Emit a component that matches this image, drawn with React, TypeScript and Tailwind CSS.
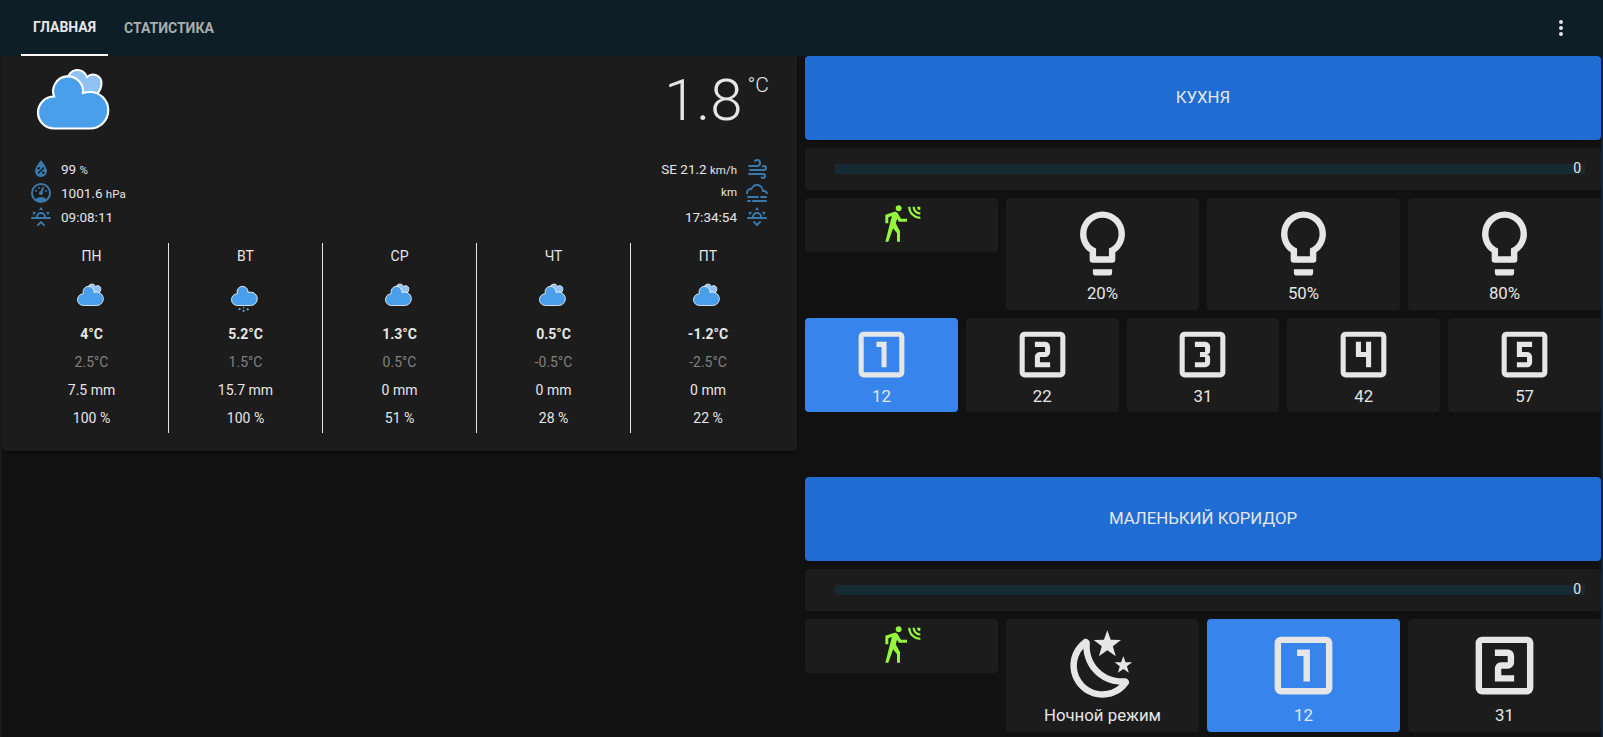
import React from 'react';

const PATHS: Record<string, string> = {
  bulb: 'M12,2A7,7 0 0,1 19,9C19,11.38 17.81,13.47 16,14.74V17A1,1 0 0,1 15,18H9A1,1 0 0,1 8,17V14.74C6.19,13.47 5,11.38 5,9A7,7 0 0,1 12,2M9,21V20H15V21A1,1 0 0,1 14,22H10A1,1 0 0,1 9,21M12,4A5,5 0 0,0 7,9C7,11.05 8.23,12.81 10,13.58V16H14V13.58C15.77,12.81 17,11.05 17,9A5,5 0 0,0 12,4Z',
  n1: 'M14,17H12V9H10V7H14M19,19H5V5H19M19,3H5A2,2 0 0,0 3,5V19A2,2 0 0,0 5,21H19A2,2 0 0,0 21,19V5C21,3.89 20.1,3 19,3Z',
  n2: 'M15,11C15,12.11 14.1,13 13,13H11V15H15V17H9V13C9,11.89 9.9,11 11,11H13V9H9V7H13A2,2 0 0,1 15,9M19,19H5V5H19M19,3H5A2,2 0 0,0 3,5V19A2,2 0 0,0 5,21H19A2,2 0 0,0 21,19V5C21,3.89 20.1,3 19,3Z',
  n3: 'M15,15V13.5A1.5,1.5 0 0,0 13.5,12A1.5,1.5 0 0,0 15,10.5V9C15,7.89 14.1,7 13,7H9V9H13V11H11V13H13V15H9V17H13A2,2 0 0,0 15,15M19,19H5V5H19M19,3H5A2,2 0 0,0 3,5V19A2,2 0 0,0 5,21H19A2,2 0 0,0 21,19V5C21,3.89 20.1,3 19,3Z',
  n4: 'M19,19V5H5V19H19M19,3A2,2 0 0,1 21,5V19A2,2 0 0,1 19,21H5A2,2 0 0,1 3,19V5A2,2 0 0,1 5,3H19M13,17V13H9V7H11V11H13V7H15V17H13Z',
  n5: 'M15,9H11V11H13A2,2 0 0,1 15,13V15C15,16.11 14.1,17 13,17H9V15H13V13H9V7H15M19,19H5V5H19M19,3H5A2,2 0 0,0 3,5V19A2,2 0 0,0 5,21H19A2,2 0 0,0 21,19V5C21,3.89 20.1,3 19,3Z',
  night: 'M17.75,4.09L15.22,6.03L16.13,9.09L13.5,7.28L10.87,9.09L11.78,6.03L9.25,4.09L12.44,4L13.5,1L14.56,4L17.75,4.09M21.25,11L19.61,12.25L20.2,14.23L18.5,13.06L16.8,14.23L17.39,12.25L15.75,11L17.81,10.95L18.5,9L19.19,10.95L21.25,11M18.97,15.95C19.8,15.87 20.69,17.05 20.16,17.8C19.84,18.25 19.5,18.67 19.08,19.07C15.17,23 8.84,23 4.94,19.07C1.03,15.17 1.03,8.83 4.94,4.93C5.34,4.53 5.76,4.17 6.21,3.85C6.96,3.32 8.14,4.21 8.06,5.04C7.79,7.9 8.75,10.87 10.95,13.06C13.14,15.26 16.1,16.22 18.97,15.95M17.33,17.97C14.5,17.81 11.7,16.64 9.53,14.5C7.36,12.31 6.2,9.5 6.04,6.68C3.23,9.82 3.34,14.64 6.35,17.66C9.37,20.67 14.19,20.78 17.33,17.97Z',
  motion: 'M10,0.2C9,0.2 8.2,1 8.2,2C8.2,3 9,3.8 10,3.8C11,3.8 11.8,3 11.8,2C11.8,1 11,0.2 10,0.2M15.67,1A7.33,7.33 0 0,0 23,8.33V7A6,6 0 0,1 17,1H15.67M18.33,1C18.33,3.58 20.42,5.67 23,5.67V4.33C21.16,4.33 19.67,2.84 19.67,1H18.33M21,1A2,2 0 0,0 23,3V1H21M7.92,4.03C7.75,4.03 7.58,4.06 7.42,4.11L2,5.8V11H3.8V7.33L5.91,6.67L2,22H3.8L6.67,13.89L9,17V22H10.8V15.59L8.31,11.05L9.04,8.18L10.12,10H15V8.2H11.38L9.38,4.87C9.08,4.37 8.54,4.03 7.92,4.03Z',
  drop: 'M12,3.25C12,3.25 6,10 6,14C6,17.32 8.69,20 12,20A6,6 0 0,0 18,14C18,10 12,3.25 12,3.25M14.47,9.97L15.53,11.03L9.53,17.03L8.47,15.97M9.75,10A1.25,1.25 0 0,1 11,11.25A1.25,1.25 0 0,1 9.75,12.5A1.25,1.25 0 0,1 8.5,11.25A1.25,1.25 0 0,1 9.75,10M14.25,14.5A1.25,1.25 0 0,1 15.5,15.75A1.25,1.25 0 0,1 14.25,17A1.25,1.25 0 0,1 13,15.75A1.25,1.25 0 0,1 14.25,14.5Z',
  gauge: 'M12,2A10,10 0 0,0 2,12A10,10 0 0,0 12,22A10,10 0 0,0 22,12A10,10 0 0,0 12,2M12,4A8,8 0 0,1 20,12C20,14.4 19,16.5 17.3,18C15.9,16.7 14,16 12,16C10,16 8.2,16.7 6.7,18C5,16.5 4,14.4 4,12A8,8 0 0,1 12,4M14,5.89C13.62,5.9 13.26,6.15 13.1,6.54L11.81,9.77L11.71,10C11,10.13 10.41,10.6 10.14,11.26C9.73,12.29 10.23,13.45 11.26,13.86C12.29,14.27 13.45,13.77 13.86,12.74C14.12,12.08 14,11.32 13.57,10.76L13.67,10.5L14.96,7.29L14.97,7.26C15.17,6.75 14.92,6.17 14.41,5.96C14.28,5.91 14.15,5.89 14,5.89M10,6A1,1 0 0,0 9,7A1,1 0 0,0 10,8A1,1 0 0,0 11,7A1,1 0 0,0 10,6M7,9A1,1 0 0,0 6,10A1,1 0 0,0 7,11A1,1 0 0,0 8,10A1,1 0 0,0 7,9M17,9A1,1 0 0,0 16,10A1,1 0 0,0 17,11A1,1 0 0,0 18,10A1,1 0 0,0 17,9Z',
  sunup: 'M3,12H7A5,5 0 0,1 12,7A5,5 0 0,1 17,12H21A1,1 0 0,1 22,13A1,1 0 0,1 21,14H3A1,1 0 0,1 2,13A1,1 0 0,1 3,12M15,12A3,3 0 0,0 12,9A3,3 0 0,0 9,12H15M12,2L14.39,5.42C13.65,5.15 12.84,5 12,5C11.16,5 10.35,5.15 9.61,5.42L12,2M3.34,7L7.5,6.65C6.9,7.16 6.36,7.78 5.94,8.5C5.5,9.24 5.25,10 5.11,10.79L3.34,7M20.65,7L18.88,10.79C18.74,10 18.47,9.23 18.05,8.5C17.63,7.78 17.1,7.15 16.5,6.64L20.65,7M12.71,16.3L15.82,19.41C16.21,19.8 16.21,20.43 15.82,20.82C15.43,21.21 14.8,21.21 14.41,20.82L12,18.41L9.59,20.82C9.2,21.21 8.57,21.21 8.18,20.82C7.79,20.43 7.79,19.8 8.18,19.41L11.29,16.3C11.5,16.1 11.74,16 12,16C12.26,16 12.5,16.1 12.71,16.3Z',
  sundown: 'M3,12H7A5,5 0 0,1 12,7A5,5 0 0,1 17,12H21A1,1 0 0,1 22,13A1,1 0 0,1 21,14H3A1,1 0 0,1 2,13A1,1 0 0,1 3,12M15,12A3,3 0 0,0 12,9A3,3 0 0,0 9,12H15M12,2L14.39,5.42C13.65,5.15 12.84,5 12,5C11.16,5 10.35,5.15 9.61,5.42L12,2M3.34,7L7.5,6.65C6.9,7.16 6.36,7.78 5.94,8.5C5.5,9.24 5.25,10 5.11,10.79L3.34,7M20.65,7L18.88,10.79C18.74,10 18.47,9.23 18.05,8.5C17.63,7.78 17.1,7.15 16.5,6.64L20.65,7M12.71,20.71L15.82,17.6C16.21,17.21 16.21,16.57 15.82,16.18C15.43,15.79 14.8,15.79 14.41,16.18L12,18.59L9.59,16.18C9.2,15.79 8.57,15.79 8.18,16.18C7.79,16.57 7.79,17.21 8.18,17.6L11.29,20.71C11.5,20.9 11.74,21 12,21C12.26,21 12.5,20.9 12.71,20.71Z',
  windy: 'M4,10A1,1 0 0,1 3,9A1,1 0 0,1 4,8H12A2,2 0 0,0 14,6A2,2 0 0,0 12,4C11.45,4 10.95,4.22 10.59,4.59C10.2,5 9.56,5 9.17,4.59C8.78,4.2 8.78,3.56 9.17,3.17C9.9,2.45 10.9,2 12,2A4,4 0 0,1 16,6A4,4 0 0,1 12,10H4M19,12A1,1 0 0,0 20,11A1,1 0 0,0 19,10C18.72,10 18.47,10.11 18.29,10.29C17.9,10.68 17.27,10.68 16.88,10.29C16.5,9.9 16.5,9.27 16.88,8.88C17.42,8.34 18.17,8 19,8A3,3 0 0,1 22,11A3,3 0 0,1 19,14H5A1,1 0 0,1 4,13A1,1 0 0,1 5,12H19M18,18H4A1,1 0 0,1 3,17A1,1 0 0,1 4,16H18A3,3 0 0,1 21,19A3,3 0 0,1 18,22C17.17,22 16.42,21.66 15.88,21.12C15.5,20.73 15.5,20.1 15.88,19.71C16.27,19.32 16.9,19.32 17.29,19.71C17.47,19.89 17.72,20 18,20A1,1 0 0,0 19,19A1,1 0 0,0 18,18Z',
  fog: 'M3,15H13A1,1 0 0,1 14,16A1,1 0 0,1 13,17H3A1,1 0 0,1 2,16A1,1 0 0,1 3,15M16,15H21A1,1 0 0,1 22,16A1,1 0 0,1 21,17H16A1,1 0 0,1 15,16A1,1 0 0,1 16,15M1,12A5,5 0 0,1 6,7C7,4.65 9.3,3 12,3C15.43,3 18.24,5.66 18.5,9.03L19,9C21.19,9 22.97,10.76 23,13H21A2,2 0 0,0 19,11H17V10A5,5 0 0,0 12,5C9.5,5 7.45,6.82 7.06,9.19C6.73,9.07 6.37,9 6,9A3,3 0 0,0 3,12C3,12.35 3.06,12.69 3.17,13H1.1L1,12M3,19H5A1,1 0 0,1 6,20A1,1 0 0,1 5,21H3A1,1 0 0,1 2,20A1,1 0 0,1 3,19M8,19H21A1,1 0 0,1 22,20A1,1 0 0,1 21,21H8A1,1 0 0,1 7,20A1,1 0 0,1 8,19Z',
  dots: 'M12,16A2,2 0 0,1 14,18A2,2 0 0,1 12,20A2,2 0 0,1 10,18A2,2 0 0,1 12,16M12,10A2,2 0 0,1 14,12A2,2 0 0,1 12,14A2,2 0 0,1 10,12A2,2 0 0,1 12,10M12,4A2,2 0 0,1 14,6A2,2 0 0,1 12,8A2,2 0 0,1 10,6A2,2 0 0,1 12,4Z',
};

const Icon = ({ name, className }: { name: string; className: string }) => (
  <svg viewBox="0 0 24 24" className={className} fill="currentColor">
    <path d={PATHS[name]} />
  </svg>
);

const MAIN_CLOUD = 'M20 63.5 A16 16 0 0 1 20 31.5 A15 15 0 1 1 49 28 C51 27.4 53.5 27 56 27 A18.2 18.2 0 0 1 56 63.5 Z';
const BACK_CLOUD = 'M33.5 14 A10 10 0 0 1 53 12 A8.5 8.5 0 0 1 67.5 18 C67.5 23 66 26 63 29 L44 31 Z';

const Cloud = ({ className, back = true, snow = false }: { className: string; back?: boolean; snow?: boolean }) => (
  <svg viewBox="0 0 76 78" className={`overflow-visible ${className}`}>
    {back && <path d={BACK_CLOUD} fill="#90c2f5" stroke="#ffffff" strokeWidth="2" />}
    <path d={MAIN_CLOUD} fill="#4a9fea" stroke="#ffffff" strokeWidth="2.2" />
    {snow && (
      <g fill="#6aa9e0">
        <circle cx="26" cy="73" r="3" />
        <circle cx="37" cy="78" r="3" />
        <circle cx="48" cy="74" r="3" />
        <circle cx="37" cy="69" r="2" />
      </g>
    )}
  </svg>
);

const DAYS = [
  { day: 'ПН', hi: '4°C', lo: '2.5°C', rain: '7.5 mm', pop: '100 %', snow: false },
  { day: 'ВТ', hi: '5.2°C', lo: '1.5°C', rain: '15.7 mm', pop: '100 %', snow: true },
  { day: 'СР', hi: '1.3°C', lo: '0.5°C', rain: '0 mm', pop: '51 %', snow: false },
  { day: 'ЧТ', hi: '0.5°C', lo: '-0.5°C', rain: '0 mm', pop: '28 %', snow: false },
  { day: 'ПТ', hi: '-1.2°C', lo: '-2.5°C', rain: '0 mm', pop: '22 %', snow: false },
];

const WeatherCard = () => (
  <div className="w-[795px] h-[395px] shrink-0 bg-[#1c1c1c] rounded-b shadow-[0_1px_2px_rgba(0,0,0,0.5)] text-[#e6e6e6] pl-[13px] pr-[12px]">
    {/* Current */}
    <div className="flex justify-between h-[101px]">
      <Cloud className="ml-[19px] mt-[9px] w-[76px] h-[78px]" />
      <div className="flex items-start pr-[16px]">
        <span className="text-[58px] leading-none font-light mt-[15px]">1.8</span>
        <span className="text-[21px] leading-none font-light mt-[19px] ml-[5px]">°C</span>
      </div>
    </div>
    {/* Details */}
    <div className="flex justify-between pl-[14px] pr-[16px] text-[13.5px] h-[72px]">
      <div className="flex flex-col">
        <div className="flex items-center h-[24px] gap-[8px]">
          <Icon name="drop" className="w-6 h-6 text-[#3b79ab]" />
          <span>99 <span className="text-[11.5px]">%</span></span>
        </div>
        <div className="flex items-center h-[24px] gap-[8px]">
          <Icon name="gauge" className="w-6 h-6 text-[#3b79ab]" />
          <span>1001.6 <span className="text-[11.5px]">hPa</span></span>
        </div>
        <div className="flex items-center h-[24px] gap-[8px]">
          <Icon name="sunup" className="w-6 h-6 text-[#3b79ab]" />
          <span>09:08:11</span>
        </div>
      </div>
      <div className="flex flex-col items-end">
        <div className="flex items-center h-[24px] gap-[8px]">
          <span>SE 21.2 <span className="text-[11.5px]">km/h</span></span>
          <Icon name="windy" className="w-6 h-6 text-[#3b79ab]" />
        </div>
        <div className="flex items-center h-[24px] gap-[8px]">
          <span className="text-[11.5px]">km</span>
          <Icon name="fog" className="w-6 h-6 text-[#3b79ab]" />
        </div>
        <div className="flex items-center h-[24px] gap-[8px]">
          <span>17:34:54</span>
          <Icon name="sundown" className="w-6 h-6 text-[#3b79ab]" />
        </div>
      </div>
    </div>
    {/* Forecast */}
    <div className="grid grid-cols-5 mt-[14px] text-[14px]">
      {DAYS.map((d, i) => (
        <div key={d.day} className={`flex flex-col items-center h-[190px] ${i < 4 ? 'border-r border-[#e6e6e6]' : ''}`}>
          <div className="h-[26px] flex items-center">{d.day}</div>
          <div className="h-[51px] flex items-center justify-center">
            <Cloud className="w-[28px] h-[29px] mt-[3px] mr-[4px]" back={!d.snow} snow={d.snow} />
          </div>
          <div className="h-[28px] flex items-center font-bold">{d.hi}</div>
          <div className="h-[28px] flex items-center text-[#808080]">{d.lo}</div>
          <div className="h-[28px] flex items-center">{d.rain}</div>
          <div className="h-[28px] flex items-center">{d.pop}</div>
        </div>
      ))}
    </div>
  </div>
);

const RoomHeader = ({ title }: { title: string }) => (
  <div className="h-[84px] bg-[#1f6dd2] rounded flex items-center justify-center text-[16.8px] text-[#e6e6e6] uppercase shadow-[0_1px_2px_rgba(0,0,0,0.4)]">
    {title}
  </div>
);

const Slider = () => (
  <div className="relative h-[42px] bg-[#1c1c1c] rounded mt-[8px] flex items-center pl-[30px] pr-[16px]">
    <div className="w-full h-[10px] bg-[#162a34]" />
    <span className="absolute right-[20px] top-[11px] text-[14px] leading-[18px] text-[#e6e6e6]">0</span>
  </div>
);

const Motion = () => (
  <div className="h-[54px] bg-[#1c1c1c] rounded flex justify-center pt-[7px]">
    <Icon name="motion" className="w-10 h-10 text-[#94f53c]" />
  </div>
);

// tall is the taller row of the lower room, small the five-column scene row
const Tile = ({ icon, label, active, small, tall }: { icon: string; label: string; active?: boolean; small?: boolean; tall?: boolean }) => (
  <div className={`flex flex-col items-center rounded text-[#e6e6e6] ${active ? 'bg-[#3785ec]' : 'bg-[#1c1c1c]'} ${small ? 'pt-[6px]' : tall ? 'pt-[8px]' : 'pt-[7px]'}`}>
    <Icon name={icon} className={small ? 'w-[61px] h-[61px]' : 'w-[77px] h-[77px]'} />
    <span className={`text-[16.8px] leading-[18px] ${small ? 'mt-[2px] mb-[7px]' : 'mt-[2px] mb-[8px]'}`}>{label}</span>
  </div>
);

export default function App() {
  return (
    <div className="h-screen flex flex-col overflow-hidden bg-[#111111]" style={{ fontFamily: 'Roboto, sans-serif' }}>
      {/* Tabs */}
      <header className="h-[56px] shrink-0 bg-[#0d1e26] flex items-stretch justify-between pl-[21px] pr-[30px]">
        <nav className="flex text-[14px] font-bold uppercase">
          <div className="w-[87px] flex items-center justify-center text-[#e6e6e6] border-b-2 border-white">Главная</div>
          <div className="px-[16px] flex items-center text-[#a8adb0]">Статистика</div>
        </nav>
        <div className="flex items-center">
          <Icon name="dots" className="w-6 h-6 text-[#e6e6e6]" />
        </div>
      </header>

      <main className="flex-1 min-h-0 flex gap-2 border-l-2 border-r-2 border-l-[#1a1a1a] border-r-[#14233a]">
        <WeatherCard />

        <div className="flex-1 min-w-0">
          <RoomHeader title="Кухня" />
          <Slider />
          <div className="grid grid-cols-4 gap-2 mt-[8px] items-start">
            <Motion />
            <Tile icon="bulb" label="20%" />
            <Tile icon="bulb" label="50%" />
            <Tile icon="bulb" label="80%" />
          </div>
          <div className="grid grid-cols-5 gap-2 mt-[8px]">
            <Tile icon="n1" label="12" active small />
            <Tile icon="n2" label="22" small />
            <Tile icon="n3" label="31" small />
            <Tile icon="n4" label="42" small />
            <Tile icon="n5" label="57" small />
          </div>

          <div className="mt-[65px]">
            <RoomHeader title="Маленький коридор" />
          </div>
          <Slider />
          <div className="grid grid-cols-4 gap-2 mt-[8px] items-start">
            <Motion />
            <Tile icon="night" label="Ночной режим" tall />
            <Tile icon="n1" label="12" active tall />
            <Tile icon="n2" label="31" tall />
          </div>
        </div>
      </main>
    </div>
  );
}
